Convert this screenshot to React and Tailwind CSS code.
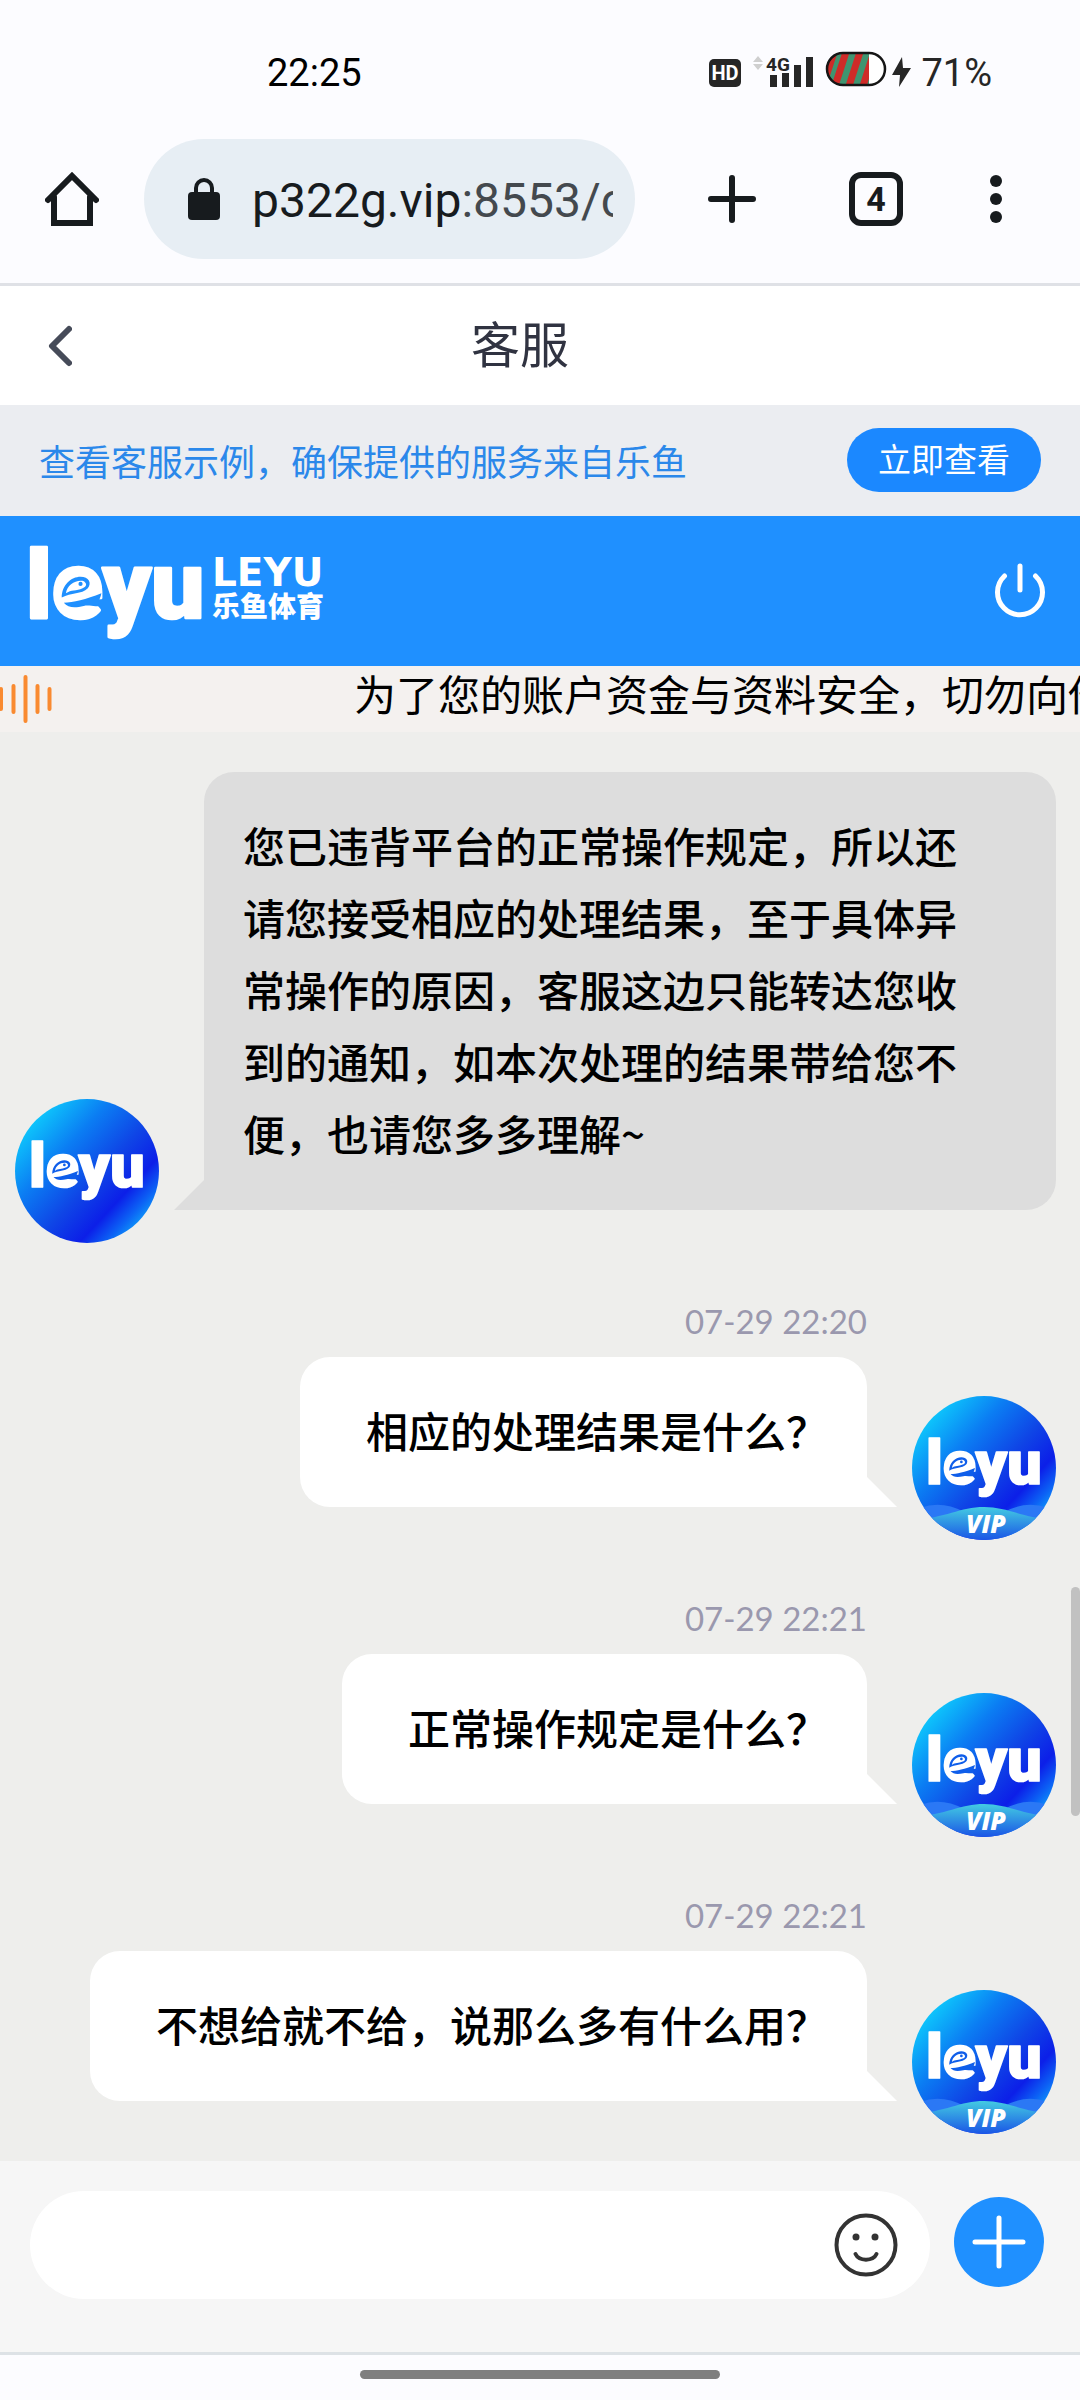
import React from "react";

const CJK = "font-['Noto_Sans_CJK_SC',sans-serif]";

function Wordmark({ x, y, size, accent }) {
  return (
    <g>
      <text x={x} y={y} fontFamily="Roboto, sans-serif" fontWeight="900" fontSize={size} fill="#fff" stroke="#fff" strokeWidth={size / 36} strokeLinejoin="round">
        leyu
      </text>
      <g transform={`translate(${x + size * 0.28} ${y - size * 0.54}) scale(${size / 90})`}>
        <ellipse cx="24" cy="23" rx="16" ry="14" fill="#fff" />
        <path d="M9 29C9 17 18 9 27 9C35 9 38 15 34 20C28 26 18 24 9 29Z" fill={accent} />
        <path d="M13 25C14 17 22 12 29 13C34 15 33 19 29 20C23 23 18 21 13 25Z" fill="#fff" />
        <circle cx="27" cy="16" r="2" fill={accent} />
        <path d="M11 34C20 34 32 31 47 25C46 31 42 35 45 37C39 38 36 36 30 37C22 39 15 39 11 34Z" fill={accent} />
      </g>
    </g>
  );
}

function Avatar({ vip }) {
  return (
    <svg viewBox="0 0 144 144" className="size-36 shrink-0" role="img" aria-label={vip ? "leyu VIP" : "leyu"}>
      <defs>
        <linearGradient id="sky" x1="0.1" y1="0.12" x2="0.92" y2="0.88">
          <stop offset="0" stopColor="#0ed0fd" />
          <stop offset="0.3" stopColor="#0b7df3" />
          <stop offset="0.56" stopColor="#0f45e6" />
          <stop offset="0.76" stopColor="#0c1fe8" />
          <stop offset="0.88" stopColor="#0c62f5" />
          <stop offset="1" stopColor="#0fb4fb" />
        </linearGradient>
        <linearGradient id="wave" x1="0" y1="0" x2="0" y2="1">
          <stop offset="0" stopColor="#43cbe2" />
          <stop offset="1" stopColor="#1a55e6" />
        </linearGradient>
        <clipPath id="disc">
          <circle cx="72" cy="72" r="72" />
        </clipPath>
      </defs>
      <g clipPath="url(#disc)">
        <rect width="144" height="144" fill="url(#sky)" />
        {vip && (
          <>
            <path d="M8 112Q30 104 52 116L40 130H8ZM92 116Q114 104 136 112V130H104Z" fill="#2b78f5" />
            <path d="M0 124C34 122 48 111 72 111S110 122 144 124V144H0Z" fill="url(#wave)" />
            <text x="74" y="137" textAnchor="middle" fontFamily="Open Sans, sans-serif" fontWeight="800" fontStyle="italic" fontSize="25" fill="#fff">
              VIP
            </text>
          </>
        )}
      </g>
      <Wordmark x={14} y={88} size={61} accent="#0f5eea" />
    </svg>
  );
}

function StatusBar() {
  return (
    <div className="flex h-[139px] items-start justify-between pt-[50px] pr-[88px] pl-[267px] font-['Roboto',sans-serif]">
      <span className="text-[38px] leading-[46px] text-black">22:25</span>
      <div className="flex items-center text-[#262626]">
        <svg viewBox="0 0 204 46" className="h-[46px] w-[204px]" aria-label="状态图标">
          <rect x="0" y="9" width="32" height="28" rx="5" fill="#262626" />
          <text x="16" y="30" textAnchor="middle" fontFamily="Roboto, sans-serif" fontWeight="700" fontSize="20" fill="#fff">HD</text>
          <path d="M44 12L49 6L54 12ZM44 14H54L49 20Z" fill="#cfcfcf" />
          <text x="57" y="21" fontFamily="Roboto, sans-serif" fontWeight="700" fontSize="19" fill="#262626">4G</text>
          <path d="M61 25h7v12h-7zM73 23h7v14h-7zM85 15h7v22h-7zM97 7h7v30h-7z" fill="#262626" />
          <clipPath id="cell">
            <path d="M133 4H160V35H133A15.500 15.500 0 0 1 133 4Z" />
          </clipPath>
          <rect x="118" y="3" width="58" height="32" rx="16" fill="#fff" />
          <g clipPath="url(#cell)">
            <rect x="116" y="2" width="44" height="34" fill="#3f9470" />
            <path d="M114 36L125 2M126 36L137 2M140 36L151 2M154 36L165 2" stroke="#cf2b28" strokeWidth="7" />
          </g>
          <rect x="118" y="3" width="58" height="32" rx="16" fill="none" stroke="#151515" strokeWidth="2.500" />
          <path d="M193 7L183 25H191L190 37L202 18H194Z" fill="#262626" />
        </svg>
        <span className="ml-2 text-[38px] leading-[46px]">71%</span>
      </div>
    </div>
  );
}

function BrowserBar() {
  return (
    <div className="flex h-[147px] items-start border-b-3 border-[#dfe1e6] pr-[66px] pl-[45px]">
      <button type="button" aria-label="主页" className="mt-[33px]">
        <svg viewBox="0 0 54 54" className="size-[54px]" fill="none" stroke="#171b1e" strokeWidth="6" strokeLinecap="round">
          <path d="M9 25V51H45V25M3 28L27 4L51 28" />
        </svg>
      </button>
      <div className="ml-[45px] flex h-[120px] flex-1 items-center rounded-full bg-[#e7eef4] pr-[22px] pl-11">
        <svg viewBox="0 0 32 42" className="h-[42px] w-8 shrink-0">
          <rect y="14" width="32" height="28" rx="4" fill="#171b1e" />
          <path d="M8 15V10A8 8 0 0 1 24 10V15" fill="none" stroke="#171b1e" strokeWidth="4" />
        </svg>
        <div className="ml-8 w-0 flex-1 overflow-hidden pt-1 font-['Roboto',sans-serif] text-[48px] leading-[60px] whitespace-nowrap text-[#171b1e]">
          p322g.vip<span className="text-[#44494e]">:8553/chat</span>
        </div>
      </div>
      <button type="button" aria-label="新标签页" className="mt-9 ml-[73px]">
        <svg viewBox="0 0 48 48" className="size-12" stroke="#171b1e" strokeWidth="6" strokeLinecap="round">
          <path d="M24 3V45M3 24H45" />
        </svg>
      </button>
      <button type="button" aria-label="标签页" className="mt-[33px] ml-[93px] flex size-[54px] items-center justify-center rounded-xl border-6 border-[#171b1e] font-['Roboto',sans-serif] text-[34px] leading-10 font-bold text-[#171b1e]">
        4
      </button>
      <button type="button" aria-label="菜单" className="mt-9 ml-[75px]">
        <svg viewBox="0 0 36 48" className="h-12 w-9" fill="#171b1e">
          <circle cx="18" cy="6" r="6" />
          <circle cx="18" cy="24" r="6" />
          <circle cx="18" cy="42" r="6" />
        </svg>
      </button>
    </div>
  );
}

function Sent({ time, text }) {
  return (
    <div className="mt-[54px]">
      <time className="mr-[189px] block text-right font-['Lato',sans-serif] text-[33px] leading-[48px] text-[#9a98ae]">{time}</time>
      <div className="mt-3 flex items-end justify-end">
        <div className="relative mb-[33px] rounded-[30px] rounded-br-none bg-white pt-[37px] pr-[39px] pb-[41px] pl-[66px]">
          <p className="text-[42px] leading-[72px] font-medium text-black">{text}</p>
          <svg viewBox="0 0 30 30" className="absolute bottom-0 left-full size-[30px]">
            <path d="M0 0L30 30H0Z" fill="#fff" />
          </svg>
        </div>
        <div className="ml-[45px] flex">
          <Avatar vip />
        </div>
      </div>
    </div>
  );
}

export default function App() {
  return (
    <div className={`flex min-h-screen flex-col bg-[#fcfcff] ${CJK}`}>
      <StatusBar />
      <BrowserBar />

      <header className="flex h-[119px] items-center bg-white pr-[112px] pl-12">
        <button type="button" aria-label="返回">
          <svg viewBox="0 0 24 42" className="h-[42px] w-6" fill="none" stroke="#464b59" strokeWidth="6" strokeLinecap="round" strokeLinejoin="round">
            <path d="M21 4L4 21L21 38" />
          </svg>
        </button>
        <h1 className="flex-1 pb-2 text-center text-[49px] leading-[64px] text-[#303341]">客服</h1>
      </header>

      <div className="flex h-[111px] items-center justify-between bg-[#ebedf1] px-[39px] pb-0.5">
        <p className="text-[36px] leading-[48px] text-[#2b88ea]">查看客服示例，确保提供的服务来自乐鱼</p>
        <button type="button" className="h-16 rounded-full bg-[#1b88ff] px-[31px] pb-1 text-[33px] leading-[48px] text-white">立即查看</button>
      </div>

      <div className="flex h-[150px] items-center justify-between bg-[#1f90ff] pr-[34px] pl-[26px]">
        <div className="flex items-center">
          <svg viewBox="0 0 182 114" className="h-[114px] w-[182px]" role="img" aria-label="leyu">
            <Wordmark x={0} y={84} size={94} accent="#1f90ff" />
          </svg>
          <div className="ml-1 pb-1 text-white">
            <div className="font-['DejaVu_Sans',sans-serif] text-[39px] leading-8 font-bold">LEYU</div>
            <div className="text-[28px] leading-8 font-black">乐鱼体育</div>
          </div>
        </div>
        <button type="button" aria-label="退出">
          <svg viewBox="0 0 52 56" className="h-14 w-[52px]" fill="none" stroke="#fff" strokeWidth="5" strokeLinecap="round">
            <path d="M26 3V27M10.500 13A22.500 22.500 0 1 0 41.500 13" />
          </svg>
        </button>
      </div>

      <div className="flex h-[66px] items-start overflow-hidden bg-[#f4f1ef]">
        <svg viewBox="0 0 54 66" className="h-[66px] w-[54px] shrink-0" stroke="#f98a30" strokeWidth="4" strokeLinecap="round">
          <path d="M1 23V43M13.500 20V46M25.500 11V55M37.500 20V46M49.500 23V43" />
        </svg>
        <p className="ml-[300px] w-0 flex-1 overflow-hidden text-[42px] leading-[54px] whitespace-nowrap text-black">为了您的账户资金与资料安全，切勿向他人</p>
      </div>

      <main className="relative flex-1 bg-[#eeeeec] pt-10 pr-6 pb-[27px] pl-[15px]">
        <div className="flex items-end">
          <Avatar />
          <div className="relative mb-[33px] ml-[45px] flex-1 rounded-[30px] rounded-bl-none bg-[#dddddd] pt-[37px] pr-[90px] pb-[41px] pl-[39px]">
            <p className="text-[42px] leading-[72px] font-medium text-black">
              您已违背平台的正常操作规定，所以还请您接受相应的处理结果，至于具体异常操作的原因，客服这边只能转达您收到的通知，如本次处理的结果带给您不便，也请您多多理解~
            </p>
            <svg viewBox="0 0 30 30" className="absolute right-full bottom-0 size-[30px]">
              <path d="M30 0V30H0Z" fill="#dddddd" />
            </svg>
          </div>
        </div>
        <Sent time="07-29 22:20" text="相应的处理结果是什么？" />
        <Sent time="07-29 22:21" text="正常操作规定是什么？" />
        <Sent time="07-29 22:21" text="不想给就不给，说那么多有什么用？" />
        <div className="absolute top-[855px] right-0 h-[229px] w-[9px] rounded-full bg-[#c1c1c1]" />
      </main>

      <form className="flex h-[194px] items-start border-b-3 border-[#dde2e6] bg-[#f6f6f6] pt-[30px] pr-9 pl-[30px]">
        <div className="flex h-[108px] flex-1 items-center rounded-full bg-white pr-8 pl-12">
          <input type="text" aria-label="消息" className="h-16 w-0 flex-1 bg-transparent text-[42px] outline-none" />
          <button type="button" aria-label="表情">
            <svg viewBox="0 0 64 64" className="size-16" fill="none" stroke="#333" strokeWidth="4" strokeLinecap="round">
              <circle cx="32" cy="32" r="29.500" />
              <circle cx="22" cy="24" r="3.500" fill="#333" stroke="none" />
              <circle cx="41" cy="24" r="3.500" fill="#333" stroke="none" />
              <path d="M21.500 41C25 48.500 39 48.500 42.500 41" />
            </svg>
          </button>
        </div>
        <button type="button" aria-label="更多" className="mt-1.5 ml-6 flex size-[90px] items-center justify-center rounded-full bg-[#1f90ff]">
          <svg viewBox="0 0 54 54" className="size-[54px]" stroke="#fff" strokeWidth="5" strokeLinecap="round">
            <path d="M27 3V51M3 27H51" />
          </svg>
        </button>
      </form>
      <div className="flex h-[45px] justify-center pt-[15px]">
        <div className="h-[9px] w-1/3 rounded-full bg-[#7f7f7f]" />
      </div>
    </div>
  );
}
